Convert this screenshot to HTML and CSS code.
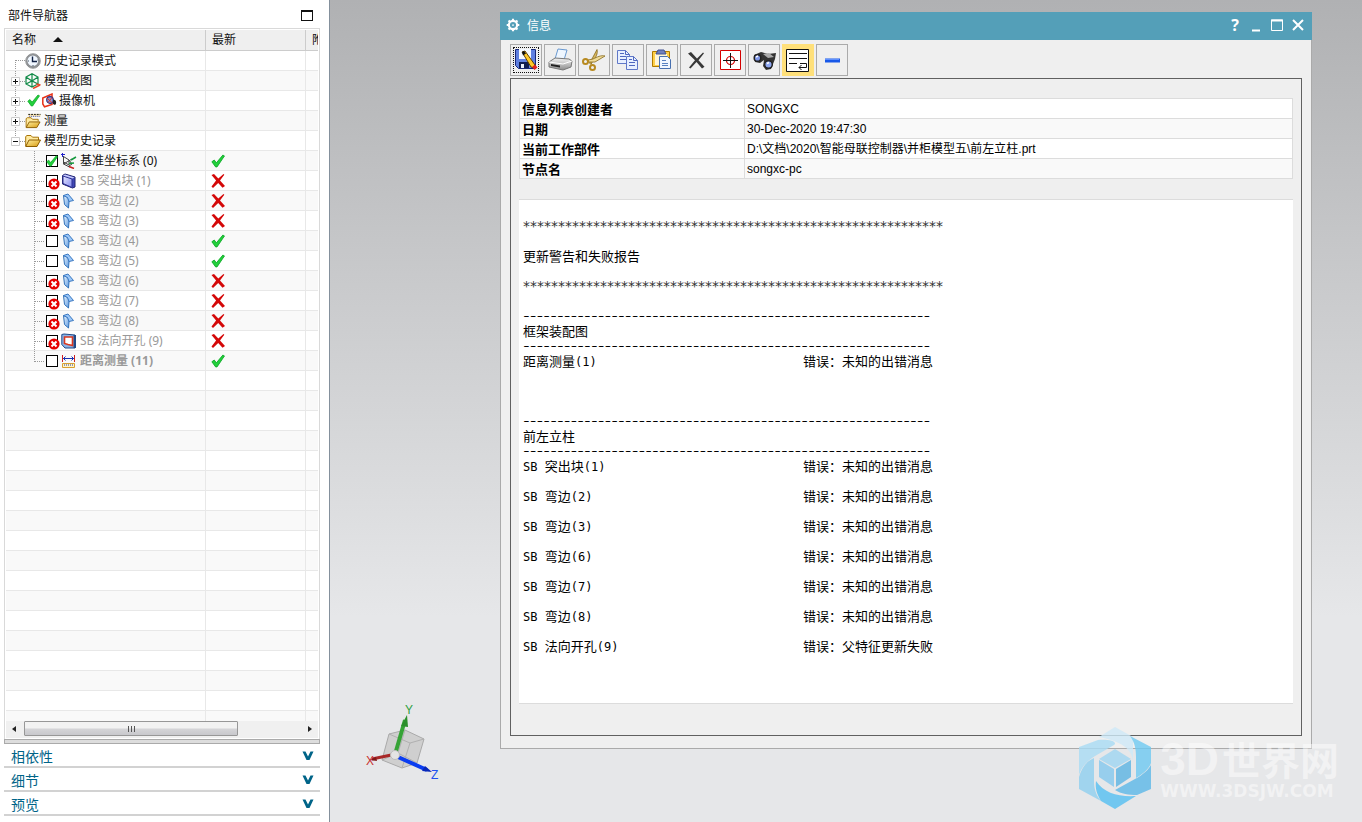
FILE: index.html
```
<!DOCTYPE html>
<html lang="zh-CN">
<head>
<meta charset="utf-8">
<title>部件导航器</title>
<link rel="stylesheet" href="styles.css">
</head>
<body>
<svg class="defs" aria-hidden="true">
  <defs>
    <linearGradient id="gold" x1="0" y1="0" x2="1" y2="1"><stop offset="0" stop-color="#fff0a0"/><stop offset="1" stop-color="#d89a10"/></linearGradient>
    <linearGradient id="sky" x1="0" y1="0" x2="1" y2="1"><stop offset="0" stop-color="#f0f8ff"/><stop offset="1" stop-color="#5a98e0"/></linearGradient>
    <linearGradient id="indigo" x1="0" y1="0" x2="1" y2="1"><stop offset="0" stop-color="#e8eaff"/><stop offset="1" stop-color="#8088f0"/></linearGradient>
    <linearGradient id="steel" x1="0" y1="0" x2="0" y2="1"><stop offset="0" stop-color="#f4f4f4"/><stop offset="1" stop-color="#8c8c8c"/></linearGradient>
  </defs>
  <symbol id="rail-first" viewBox="0 0 19 19"><path d="M9.5 9v10M10 9.500h9" fill="none" stroke="#999" stroke-dasharray="1 1"/></symbol>
  <symbol id="rail-plus" viewBox="0 0 19 19"><path d="M9.500 0v19M14 10.500h5" fill="none" stroke="#999" stroke-dasharray="1 1"/><path d="M5.500 6.500h8v8h-8z" fill="#fff" stroke="#ccc"/><path d="M7 10.500h5M9.500 8v5" stroke="#111"/></symbol>
  <symbol id="rail-minus" viewBox="0 0 19 19"><path d="M9.500 0v6M14 10.500h5" fill="none" stroke="#999" stroke-dasharray="1 1"/><path d="M5.500 6.500h8v8h-8z" fill="#fff" stroke="#ccc"/><path d="M7 10.500h5" stroke="#111"/></symbol>
  <symbol id="branch" viewBox="0 0 12 20"><path d="M.5 0v20M1 10.500h9" fill="none" stroke="#999" stroke-dasharray="1 1"/></symbol>
  <symbol id="branch-end" viewBox="0 0 12 20"><path d="M.5 0v11M1 10.500h9" fill="none" stroke="#999" stroke-dasharray="1 1"/></symbol>
  <symbol id="check" viewBox="0 0 13 13"><path d="M.8 7.200 3 5.600l2 2.600L11 1l1.500.8L5.600 12H4.300z" fill="#22d03c" stroke="#0ea828" stroke-width=".8"/></symbol>
  <symbol id="cross" viewBox="0 0 14 14"><path d="M.5 1 3 0l4.300 4.600L12.500 0l.8.800L9 6.500l5 5.500-2.500 1.800L7.200 9 2 14 .5 12.500l4.600-6z" fill="#d40808"/></symbol>
  <symbol id="error" viewBox="0 0 12 12"><circle cx="6" cy="6" r="5.600" fill="#e60000"/><path d="M3.500 3.500l5 5M8.500 3.500l-5 5" stroke="#fff" stroke-width="2"/></symbol>
  <symbol id="clock" viewBox="0 0 16 16"><circle cx="8" cy="8" r="7" fill="#8e9194"/><circle cx="8" cy="8" r="7.300" fill="none" stroke="#65686b" stroke-width=".7"/><circle cx="7.800" cy="7.800" r="5.300" fill="#f0f7ff"/><path d="M7.500 3.500v5H12" fill="none" stroke="#124" stroke-width="1.400"/><path d="M8 12v1M3 8h1M12.500 7h.7" stroke="#456"/></symbol>
  <symbol id="views" viewBox="0 0 16 16"><path d="M1 4 7 .8 13 4v7l-6 3-6-3zM7 1v13M1 4l6 4 6-4M1 11l6-3 6 3" fill="#fff" fill-opacity=".3" stroke="#118a48" stroke-width="1.200"/><path d="M8 15.500l7-3.500M11.500 11l4 1" stroke="#e8482a" stroke-width="1.600"/></symbol>
  <symbol id="camera" viewBox="0 0 15 15"><path d="M.8 5 10 1v10.500L2.500 13.800.8 11z" fill="#fff" stroke="#e83218" stroke-width="1.500"/><circle cx="8" cy="7" r="3.300" fill="#8a96d8" stroke="#303080" stroke-width="1.200"/><path d="M5 5l5.500 5M6 9.500l4-5" stroke="#e83218"/><path d="M11 6.500l2 .5c1.500 1 1.500 4 0 5l-2-1z" fill="#222"/></symbol>
  <symbol id="folder" viewBox="0 0 16 14"><path d="M.7 12V2.500L2 1.500h4l1.500 1.700h6V6" fill="#ffeaa0" stroke="#a87408"/><path d="M.7 12.500 4 6h11.500L12 12.500z" fill="url(#gold)" stroke="#8d5d00"/></symbol>
  <symbol id="measure-folder" viewBox="0 0 16 17"><path d="M.7 15V6L2 5h4l1.500 1.700h6V9" fill="#ffeaa0" stroke="#a87408"/><path d="M.7 15.500 4 9.500h11.500L12 15.500z" fill="url(#gold)" stroke="#8d5d00"/><path d="M3 1h13v3H3z" fill="#ffe9b0"/><path d="M3 1.500h13" stroke="#111" stroke-dasharray="2 1"/><path d="M4 3.500h12" stroke="#24c" stroke-dasharray="1 1"/></symbol>
  <symbol id="csys" viewBox="0 0 16 16"><path d="M2.500 3v8l6 3M2.500 11 11 6M2.500 3.500 8 7v5L2.500 9M8 7l3 4-3 2" fill="none" stroke="#444"/><path d="M0 1.500h4M1.500 0v4" stroke="#22c"/><path d="M10 7 15 4M8 10.500l5-.5" stroke="#139a3c" stroke-width="1.500"/><path d="M8 13.500l5 2" stroke="#c22" stroke-width="1.500"/></symbol>
  <symbol id="block" viewBox="0 0 16 16"><path d="M1.500 2.500 4 1l10 3v10l-2.500 1L1.500 11z" fill="#4048b8" stroke="#202470"/><path d="M2 3l9 3v8.500l-9-4z" fill="url(#indigo)" stroke="#2c3090"/><path d="M2 2.500 4 1.500l9.500 3-2 1z" fill="#c8ccff"/></symbol>
  <symbol id="flange" viewBox="0 0 16 16"><path d="M2.500 2.500 7 4.500 8 9l-.5 6-4-3.500z" fill="url(#sky)" stroke="#3070b8"/><path d="M2.500 2.500 7 1l5.500 6.500L8 8.500 6.500 4.500z" fill="#9cc8fa" stroke="#3b78c0"/></symbol>
  <symbol id="cutout" viewBox="0 0 16 16"><path d="M.8 1.500 3 1l11 1v13H4L.8 11.500z" fill="#8ab4e8" stroke="#204a88"/><path d="M12.500 2H15v13h-2.500z" fill="#204a88"/><path d="M3.500 4h8v8.500L7 11.500l-3.500-1z" fill="#fff" stroke="#d83820" stroke-width="1.600"/></symbol>
  <symbol id="distance" viewBox="0 0 16 16"><path d="M1.500 2v7M13.500 2v7" stroke="#d02020"/><path d="M2 5.500h11M4.500 3.500 2.500 5.500l2 2M10.500 3.500l2 2-2 2" fill="none" stroke="#1830b0"/><path d="M1.500 10.500h12v4h-12z" fill="#fff3c8" stroke="#d8a030"/><path d="M3 12h10" stroke="#223ca0" stroke-dasharray="1 1"/></symbol>
  <symbol id="chevron" viewBox="0 0 12 10"><path d="M.5.500h3L6 5.500 8.500.5h3L7.500 9h-3z" fill="#006488"/></symbol>
  <symbol id="gear" viewBox="0 0 16 16"><circle cx="8" cy="8" r="4.700" fill="none" stroke="#fff" stroke-width="2.400"/><path d="M8 .8v2M8 13.200v2M.8 8h2M13.200 8h2M2.900 2.900l1.500 1.500M11.600 11.600l1.500 1.500M2.900 13.100l1.500-1.500M11.600 4.400l1.500-1.500" stroke="#fff" stroke-width="2.400"/><circle cx="8" cy="8" r="1" fill="#fff"/></symbol>
</svg>

<div class="app">
  <aside class="navigator">
    <header class="nav-title">
      <h1>部件导航器</h1>
      <button class="restore" aria-label="最大化"></button>
    </header>
    <div class="tree">
      <div class="tree-view">
        <table>
          <colgroup><col class="col-name"><col class="col-state"><col></colgroup>
          <thead><tr><th>名称 <i class="sort"></i></th><th>最新</th><th>附</th></tr></thead>
          <tbody>
            <tr><td><div class="node"><svg class="rail"><use href="#rail-first"/></svg><svg class="icon"><use href="#clock"/></svg>历史记录模式</div></td><td></td><td></td></tr>
            <tr><td><div class="node"><button class="rail" aria-label="展开"><svg class="rail"><use href="#rail-plus"/></svg></button><svg class="icon"><use href="#views"/></svg>模型视图</div></td><td></td><td></td></tr>
            <tr><td><div class="node"><button class="rail" aria-label="展开"><svg class="rail"><use href="#rail-plus"/></svg></button><svg class="icon"><use href="#check"/></svg><svg class="icon"><use href="#camera"/></svg>摄像机</div></td><td></td><td></td></tr>
            <tr><td><div class="node"><button class="rail" aria-label="展开"><svg class="rail"><use href="#rail-plus"/></svg></button><svg class="icon"><use href="#measure-folder"/></svg>测量</div></td><td></td><td></td></tr>
            <tr><td><div class="node"><button class="rail" aria-label="折叠"><svg class="rail"><use href="#rail-minus"/></svg></button><svg class="icon"><use href="#folder"/></svg>模型历史记录</div></td><td></td><td></td></tr>
            <tr><td><label class="node child"><svg class="branch"><use href="#branch"/></svg><span class="tick"><input type="checkbox" checked><svg class="on"><use href="#check"/></svg></span><svg class="icon"><use href="#csys"/></svg>基准坐标系 (0)</label></td><td><svg class="state"><use href="#check"/></svg></td><td></td></tr>
            <tr><td><label class="node child off"><svg class="branch"><use href="#branch"/></svg><span class="tick"><input type="checkbox"><svg class="bad"><use href="#error"/></svg></span><svg class="icon"><use href="#block"/></svg>SB 突出块 (1)</label></td><td><svg class="state"><use href="#cross"/></svg></td><td></td></tr>
            <tr><td><label class="node child off"><svg class="branch"><use href="#branch"/></svg><span class="tick"><input type="checkbox"><svg class="bad"><use href="#error"/></svg></span><svg class="icon"><use href="#flange"/></svg>SB 弯边 (2)</label></td><td><svg class="state"><use href="#cross"/></svg></td><td></td></tr>
            <tr><td><label class="node child off"><svg class="branch"><use href="#branch"/></svg><span class="tick"><input type="checkbox"><svg class="bad"><use href="#error"/></svg></span><svg class="icon"><use href="#flange"/></svg>SB 弯边 (3)</label></td><td><svg class="state"><use href="#cross"/></svg></td><td></td></tr>
            <tr><td><label class="node child off"><svg class="branch"><use href="#branch"/></svg><span class="tick"><input type="checkbox"></span><svg class="icon"><use href="#flange"/></svg>SB 弯边 (4)</label></td><td><svg class="state"><use href="#check"/></svg></td><td></td></tr>
            <tr><td><label class="node child off"><svg class="branch"><use href="#branch"/></svg><span class="tick"><input type="checkbox"></span><svg class="icon"><use href="#flange"/></svg>SB 弯边 (5)</label></td><td><svg class="state"><use href="#check"/></svg></td><td></td></tr>
            <tr><td><label class="node child off"><svg class="branch"><use href="#branch"/></svg><span class="tick"><input type="checkbox"><svg class="bad"><use href="#error"/></svg></span><svg class="icon"><use href="#flange"/></svg>SB 弯边 (6)</label></td><td><svg class="state"><use href="#cross"/></svg></td><td></td></tr>
            <tr><td><label class="node child off"><svg class="branch"><use href="#branch"/></svg><span class="tick"><input type="checkbox"><svg class="bad"><use href="#error"/></svg></span><svg class="icon"><use href="#flange"/></svg>SB 弯边 (7)</label></td><td><svg class="state"><use href="#cross"/></svg></td><td></td></tr>
            <tr><td><label class="node child off"><svg class="branch"><use href="#branch"/></svg><span class="tick"><input type="checkbox"><svg class="bad"><use href="#error"/></svg></span><svg class="icon"><use href="#flange"/></svg>SB 弯边 (8)</label></td><td><svg class="state"><use href="#cross"/></svg></td><td></td></tr>
            <tr><td><label class="node child off"><svg class="branch"><use href="#branch"/></svg><span class="tick"><input type="checkbox"><svg class="bad"><use href="#error"/></svg></span><svg class="icon"><use href="#cutout"/></svg>SB 法向开孔 (9)</label></td><td><svg class="state"><use href="#cross"/></svg></td><td></td></tr>
            <tr><td><label class="node child off strong"><svg class="branch"><use href="#branch-end"/></svg><span class="tick"><input type="checkbox"></span><svg class="icon"><use href="#distance"/></svg>距离测量 (11)</label></td><td><svg class="state"><use href="#check"/></svg></td><td></td></tr>
            <tr><td></td><td></td><td></td></tr><tr><td></td><td></td><td></td></tr><tr><td></td><td></td><td></td></tr>
            <tr><td></td><td></td><td></td></tr><tr><td></td><td></td><td></td></tr><tr><td></td><td></td><td></td></tr>
            <tr><td></td><td></td><td></td></tr><tr><td></td><td></td><td></td></tr><tr><td></td><td></td><td></td></tr>
            <tr><td></td><td></td><td></td></tr><tr><td></td><td></td><td></td></tr><tr><td></td><td></td><td></td></tr>
            <tr><td></td><td></td><td></td></tr><tr><td></td><td></td><td></td></tr><tr><td></td><td></td><td></td></tr>
            <tr><td></td><td></td><td></td></tr><tr><td></td><td></td><td></td></tr><tr><td></td><td></td><td></td></tr>
          </tbody>
        </table>
      </div>
      <div class="scrollbar">
        <button aria-label="向左滚动"><svg viewBox="0 0 18 16"><path d="M10 5v6L6 8z" fill="#222"/></svg></button>
        <div class="thumb"><i></i><i></i><i></i></div>
        <button aria-label="向右滚动"><svg viewBox="0 0 18 16"><path d="M8 5v6l4-3z" fill="#222"/></svg></button>
      </div>
    </div>
    <div class="splitter"></div>
    <button class="section">相依性<svg><use href="#chevron"/></svg></button>
    <button class="section">细节<svg><use href="#chevron"/></svg></button>
    <button class="section">预览<svg><use href="#chevron"/></svg></button>
  </aside>

  <main class="canvas">
    <svg class="triad" viewBox="0 0 80 80">
      <path d="M24 31 40 27 59 36 52 60 37 65 17 57z" fill="#cfcfcf" stroke="#aaa"/>
      <path d="M24 31 45 40 59 36M45 40 37 65M40 27 33 50 17 57M33 50l19 10" fill="none" stroke="#b0b0b0"/>
      <path d="M31 51 7 56" stroke="#a82828" stroke-width="3"/><path d="M5 57l6-3 1 4z" fill="#801818"/>
      <path d="M31 48 40 17" stroke="#36a336" stroke-width="4"/><path d="M42 12l-6 11 7 1z" fill="#2b8f2b"/>
      <path d="M33 54 62 67" stroke="#0a3cf0" stroke-width="4"/><path d="M67 69l-7-6-3 5z" fill="#0828b8"/>
      <circle cx="30" cy="52" r="4.500" fill="#e4e4e4" stroke="#bbb"/>
      <g class="axes"><text x="1" y="62" fill="#c83030">X</text><text x="40" y="11" fill="#30a040">Y</text><text x="66" y="76" fill="#2050f0">Z</text></g>
    </svg>

    <section class="dialog" role="dialog" aria-label="信息">
      <header class="titlebar">
        <svg class="gear"><use href="#gear"/></svg>
        <h2>信息</h2>
        <button aria-label="帮助">?</button>
        <button aria-label="最小化"><svg viewBox="0 0 14 14"><path d="M3 12.500h8" stroke="#fff" stroke-width="2"/></svg></button>
        <button aria-label="最大化"><svg viewBox="0 0 14 14"><path d="M1.500 2v10.500h11V2z" fill="none" stroke="#fff"/><path d="M1 2.500h12" stroke="#fff" stroke-width="2"/></svg></button>
        <button aria-label="关闭"><svg viewBox="0 0 14 14"><path d="M2 2l10 10M12 2 2 12" stroke="#fff" stroke-width="2"/></svg></button>
      </header>
      <div class="toolbar">
        <button class="focused" aria-label="另存为"><svg viewBox="0 0 26 26"><path d="M2.500 2.500h20v19h-17l-3-3z" fill="#6080e0" stroke="#182878"/><path d="M6 2h12v10H6z" fill="#f4f8ff"/><path d="M6 15h10v6H6z" fill="#101c50"/><path d="M8 17h3v4H8z" fill="#e8eefc"/><path d="M9 5l3-1 10 14-1 3-3-1z" fill="#ffc928" stroke="#604000"/><path d="M9 5l2-1 2 2.500-3 2z" fill="#111"/><path d="M19 20l3-2.500 2.500 3-3 2.500z" fill="#e02020"/></svg></button>
        <button aria-label="打印"><svg viewBox="0 0 26 26"><path d="M8 12 11 2l9 1-3 10z" fill="#eef6ff" stroke="#6898d0"/><path d="M2 15l6-4 14 1 3 2-1 6-8 3L2 20z" fill="url(#steel)" stroke="#777"/><path d="M2 15l14 2 9-3" fill="none" stroke="#fff"/><path d="M4 17l9 1.500v2L4 19z" fill="#222"/></svg></button>
        <button aria-label="剪切"><svg viewBox="0 0 26 26"><path d="M16 2.500c1 4-1 8-4 11l-2 4-1.500-1.500 3-5z" fill="#d8b860" stroke="#86681c" stroke-width=".8"/><path d="M24 9c-4-1-8 1-12 3l-5 1v2h7z" fill="#f0dc98" stroke="#86681c" stroke-width=".8"/><circle cx="4.500" cy="14.500" r="2.500" fill="none" stroke="#b88a20" stroke-width="2"/><circle cx="11.500" cy="20.500" r="2.500" fill="none" stroke="#b88a20" stroke-width="2"/></svg></button>
        <button aria-label="复制"><svg viewBox="0 0 26 26"><g fill="#e8f0ff" stroke="#6078c8"><path d="M2.500 3.500h8l4 4v9h-12z"/><path d="M11.500 9.500h7l4 4v9h-11z"/></g><path d="M10.500 3.500v4h4M18.500 9.500v4h4M5 6.500h4M5 9.500h6M5 12.500h6M14 12.500h3M14 15.500h6M14 18.500h6" fill="none" stroke="#5068c0"/></svg></button>
        <button aria-label="粘贴"><svg viewBox="0 0 26 26"><path d="M3.500 4.500h17v15h-17z" fill="#ffd048" stroke="#b07a00"/><path d="M6 7h12v11H6z" fill="#fff6d8"/><path d="M7 7l2-4h6l2 4z" fill="#7080c0" stroke="#405090"/><path d="M10.500 9.500h8l3 3v9h-11z" fill="#f0f6ff" stroke="#4870b0"/><path d="M13 13.500h4M13 16.500h6M13 18.500h6" stroke="#5880c0"/></svg></button>
        <button aria-label="删除"><svg viewBox="0 0 26 26"><path d="M5 6.500 8 5l6 6.500L20 5.500l1 .8-5.500 7 6 6.500-2.500 1.700-5.500-6.500-6 6.500L6 20.500l6-7.200z" fill="#383838"/></svg></button>
        <button aria-label="定位"><svg viewBox="0 0 26 26"><path d="M3.500 3.500h20v19h-20z" fill="#fff" stroke="#d40000"/><circle cx="13.500" cy="13.500" r="4" fill="none" stroke="#d40000" stroke-width="1.200"/><path d="M13.500 6v15M6 13.500h15" stroke="#111"/></svg></button>
        <button aria-label="查找"><svg viewBox="0 0 26 26"><path d="M3 8 10 5l7 2 8-1-1 6-4 10-5 1-3-4 1-6-4 3-5-1z" fill="#333"/><path d="M12 7l6-1 5 4-6 1z" fill="#aaa"/><circle cx="6.500" cy="11" r="3.300" fill="#8098e8" stroke="#222" stroke-width="1.500"/><circle cx="17.500" cy="17.500" r="3.800" fill="#8fa8f0" stroke="#222" stroke-width="1.500"/><path d="M5 10l2-1M16 16.500l2-1" stroke="#fff" stroke-width="1.500"/></svg></button>
        <button class="active" aria-label="自动换行"><svg viewBox="0 0 26 26"><path d="M1.500 2.500h22v22h-22z" fill="#fff" stroke="#111"/><path d="M4 6.500h18M4 11.500h18M4 16.500h8M15 16.500h6.500v4H14M16.500 18 14 20.500l2.500 2.500" fill="none" stroke="#111"/></svg></button>
        <button aria-label="收起"><svg viewBox="0 0 26 26"><path d="M6 11.500h15v4H6z" fill="#1858e8"/><path d="M6 12h14v1H6z" fill="#5e90ff"/></svg></button>
      </div>
      <div class="frame">
        <table class="facts">
          <tbody>
            <tr><th scope="row">信息列表创建者</th><td>SONGXC</td></tr>
            <tr><th scope="row">日期</th><td>30-Dec-2020 19:47:30</td></tr>
            <tr><th scope="row">当前工作部件</th><td>D:\文档\2020\智能母联控制器\并柜模型五\前左立柱.prt</td></tr>
            <tr><th scope="row">节点名</th><td>songxc-pc</td></tr>
          </tbody>
        </table>
        <div class="report">
          <p class="stars">************************************************************</p>
          <p class="banner">更新警告和失败报告</p>
          <p class="stars">************************************************************</p>
          <div class="group">
            <p class="dashes">------------------------------------------------------------</p>
            <h3>框架装配图</h3>
            <p class="dashes">------------------------------------------------------------</p>
            <div class="entries">
              <p><span>距离测量<code>(1)</code></span><span>错误：未知的出错消息</span></p>
            </div>
          </div>
          <div class="group">
            <p class="dashes">------------------------------------------------------------</p>
            <h3>前左立柱</h3>
            <p class="dashes">------------------------------------------------------------</p>
            <div class="entries">
              <p><span><code>SB </code>突出块<code>(1)</code></span><span>错误：未知的出错消息</span></p>
              <p><span><code>SB </code>弯边<code>(2)</code></span><span>错误：未知的出错消息</span></p>
              <p><span><code>SB </code>弯边<code>(3)</code></span><span>错误：未知的出错消息</span></p>
              <p><span><code>SB </code>弯边<code>(6)</code></span><span>错误：未知的出错消息</span></p>
              <p><span><code>SB </code>弯边<code>(7)</code></span><span>错误：未知的出错消息</span></p>
              <p><span><code>SB </code>弯边<code>(8)</code></span><span>错误：未知的出错消息</span></p>
              <p><span><code>SB </code>法向开孔<code>(9)</code></span><span>错误：父特征更新失败</span></p>
            </div>
          </div>
        </div>
      </div>
    </section>

    <div class="watermark">
      <svg viewBox="0 0 72 82">
        <path d="M36 0 54 10 54 34C53 22 42 14 20 10z" fill="#cfeaf8"/>
        <path d="M0 20 19 13c12-1 20 2 16 5L16 29C6 35 2 42 0 48z" fill="#a9dcf5"/>
        <path d="M0 62V50C3 40 8 34 15 31v23c0 8 2 14 7 20z" fill="#8fd0f0"/>
        <path d="M36 82 22 74c-4-7-6-12-5-20 8 12 22 16 40 15z" fill="#55c0f2"/>
        <path d="M72 62 58 68c-8 0-16-1-22-5l20-11c8-4 14-10 16-14z" fill="#5cb8e8"/>
        <path d="M51 9l21 11v16c-2 6-8 11-15 15V30c0-8-1-14-6-21z" fill="#6fcaf2"/>
        <path d="M36 22 52 32 36 41 20 32z" fill="#a0d6f2"/><path d="M20 33l15 9v18L20 50z" fill="#84c8ee"/><path d="M52 33v17L37 60V42z" fill="#5cb4e4"/>
      </svg>
      <div class="brand"><strong>3D<span>世界网</span></strong><small>WWW.3DSJW.COM</small></div>
    </div>
  </main>
</div>
</body>
</html>
```
FILE: styles.css
```
* { box-sizing: border-box; }

body {
  margin: 0;
  background: #fff;
  color: #111;
  font: 12px/19px "Noto Sans", "Noto Sans CJK SC", sans-serif;
}

h1, h2, h3, p { margin: 0; font-size: inherit; font-weight: normal; }

button {
  margin: 0;
  padding: 0;
  border: 0;
  background: none;
  color: inherit;
  font: inherit;
}

svg { display: block; flex: none; }

.defs { position: absolute; width: 0; height: 0; }

.app { display: flex; height: 100vh; }

/* Navigator */
.navigator {
  display: flex;
  flex: none;
  flex-direction: column;
  width: 330px;
  padding: 0 9px 6px 4px;
  border-right: 1px solid #84909c;
}

.nav-title {
  display: flex;
  align-items: center;
  justify-content: space-between;
  height: 28px;
  padding: 2px 7px 0 4px;
}

.restore {
  width: 12px;
  height: 11px;
  border: 1px solid #111;
  border-top-width: 2px;
}

.tree {
  display: flex;
  flex: 1;
  flex-direction: column;
  min-height: 0;
  padding: 1px;
  border: 1px solid #d9d9d9;
  border-bottom: 0;
}

.tree-view { flex: 1; min-height: 0; overflow: hidden; }

.tree table {
  width: 100%;
  table-layout: fixed;
  border-collapse: separate;
  border-spacing: 0;
}

.col-name { width: 200px; }
.col-state { width: 100px; }

.tree th {
  height: 21px;
  padding: 0 6px;
  overflow: hidden;
  border-right: 1px solid #ccc;
  border-bottom: 1px solid #ccc;
  background: #efefef;
  font-weight: normal;
  line-height: 20px;
  text-align: left;
  white-space: nowrap;
}

.tree td {
  height: 20px;
  padding: 0;
  border-right: 1px solid #e8e8e8;
  border-bottom: 1px solid #e8e8e8;
}

.tree th:last-child, .tree td:last-child { border-right: 0; }
.tree tbody tr:nth-child(even) { background: #f9f9f9; }

.sort {
  display: inline-block;
  margin: 0 0 2px 14px;
  border: 5px solid transparent;
  border-top: 0;
  border-bottom-color: #111;
}

.node {
  display: flex;
  align-items: center;
  gap: 3px;
  height: 19px;
  white-space: nowrap;
}

.rail { width: 19px; height: 19px; margin-right: -3px; flex: none; }
.icon { width: 16px; height: 16px; }
.rail + .icon:has(+ .icon) { width: 13px; height: 13px; margin-left: 2px; }
.icon + .icon { width: 15px; height: 15px; margin: 0 -1px; }
.node.child { padding-left: 28px; }
.branch { width: 12px; height: 20px; margin-right: -3px; }
.off { color: #999; }
.strong { font-weight: bold; }

.tick { display: grid; width: 12px; height: 12px; }
.tick > * { grid-area: 1 / 1; }

.tick input {
  appearance: none;
  width: 12px;
  height: 12px;
  margin: 0;
  border: 1px solid #000;
  background: #fff;
}

.tick .on { width: 12px; height: 12px; }
.tick .bad { width: 12px; height: 12px; margin: 3px 0 0 2px; }
.state { width: 14px; height: 14px; margin-left: 5px; }

.scrollbar {
  display: flex;
  height: 17px;
  padding: 0 0 2px;
  background: #f0f0f0;
}

.scrollbar button { width: 18px; }

.thumb {
  display: flex;
  gap: 2px;
  align-items: center;
  justify-content: center;
  width: 214px;
  margin-right: auto;
  border: 1px solid #979797;
  border-radius: 1px;
  background: linear-gradient(#f2f2f2 45%, #d4d4d7 55%, #c8c8cc);
}

.thumb i { width: 1px; height: 6px; background: #555; }

.splitter {
  height: 5px;
  border: 1px solid #aaa;
  background: #ddd;
}

.section {
  display: flex;
  align-items: center;
  justify-content: space-between;
  height: 24px;
  padding: 2px 6px 0 7px;
  border-bottom: 2px solid #d2d2d2;
  color: #006488;
  font-size: 14px;
}

.section svg { width: 12px; height: 10px; }

/* Graphics area */
.canvas {
  position: relative;
  flex: 1;
  background: linear-gradient(#b0b1b3, #e6e7e9 75%);
}

.triad {
  position: absolute;
  left: 35px;
  bottom: 39px;
  width: 80px;
  height: 80px;
}

.axes { font: 12px "Liberation Sans", sans-serif; }

.dialog {
  position: absolute;
  display: flex;
  flex-direction: column;
  inset: 12px 50px 73px 170px;
  border: 1px solid #aaa;
  border-top: 0;
  background: #efefef;
  color: #000;
}

.titlebar {
  display: flex;
  align-items: center;
  gap: 7px;
  height: 28px;
  margin: 0 -1px;
  padding: 0 7px 2px 6px;
  background: #549fb8;
  color: #fff;
}

.titlebar h2 { flex: 1; }
.gear { width: 14px; height: 14px; }
.titlebar button { width: 14px; height: 18px; font-size: 16px; font-weight: bold; }
.titlebar button svg { width: 14px; height: 14px; margin: 2px 0; }

.toolbar { display: flex; gap: 2px; padding: 4px 9px 2px; }

.toolbar button {
  display: grid;
  place-items: center;
  width: 32px;
  height: 32px;
  border: 1px solid #aaa;
}

.toolbar svg { width: 26px; height: 26px; }
.toolbar .focused svg { outline: 1px dotted #111; outline-offset: -1px; }
.toolbar .active { border-color: #ffe07a; background: #ffe07a; }

.frame {
  display: flex;
  flex: 1;
  flex-direction: column;
  gap: 20px;
  margin: 0 9px 12px;
  padding: 19px 8px 31px;
  border: 1px solid #606060;
}

.facts {
  width: 100%;
  border-collapse: collapse;
  table-layout: fixed;
  background: #fff;
  font: 12px/17px "Liberation Sans", "Noto Sans CJK SC", sans-serif;
}

.facts th, .facts td {
  height: 20px;
  padding: 1px 2px 0;
  border: 1px solid #dcdcdc;
  text-align: left;
}

.facts th { width: 225px; font-size: 13px; }
.facts tr:nth-child(even) { background: #f9f9f9; }

.report {
  flex: 1;
  padding: 18px 4px;
  border-top: 1px solid #dcdcdc;
  border-bottom: 1px solid #dcdcdc;
  background: #fff;
  font: 13px/15px "Noto Sans CJK SC", sans-serif;
}

.report p, .report h3 { height: 15px; white-space: pre; }
.report code { font: 12px/15px "DejaVu Sans Mono", monospace; }
.report .stars { font: 14px/17px "DejaVu Sans", sans-serif; color: #333; }
.report .banner { margin: 15px 0; }
.report .dashes { font: 300 15px/15px Inter, sans-serif; }
.group { margin-top: 15px; }
.group + .group { margin-top: 45px; }
.entries { display: grid; gap: 15px; }
.entries p { display: grid; grid-template-columns: 280px 1fr; }

.watermark {
  position: absolute;
  display: flex;
  right: 23px;
  bottom: 13px;
  gap: 9px;
  opacity: .8;
}

.watermark svg { width: 72px; height: 82px; }
.brand { display: flex; flex-direction: column; padding-top: 7px; color: #fff; opacity: .6; }
.brand strong { font: bold 46px/48px "Liberation Sans", sans-serif; white-space: nowrap; }
.brand strong span { margin-left: 3px; font: bold 39px/48px "Noto Sans CJK SC", sans-serif; }
.brand small { font: bold 17px/16px "DejaVu Sans", sans-serif; }
```
